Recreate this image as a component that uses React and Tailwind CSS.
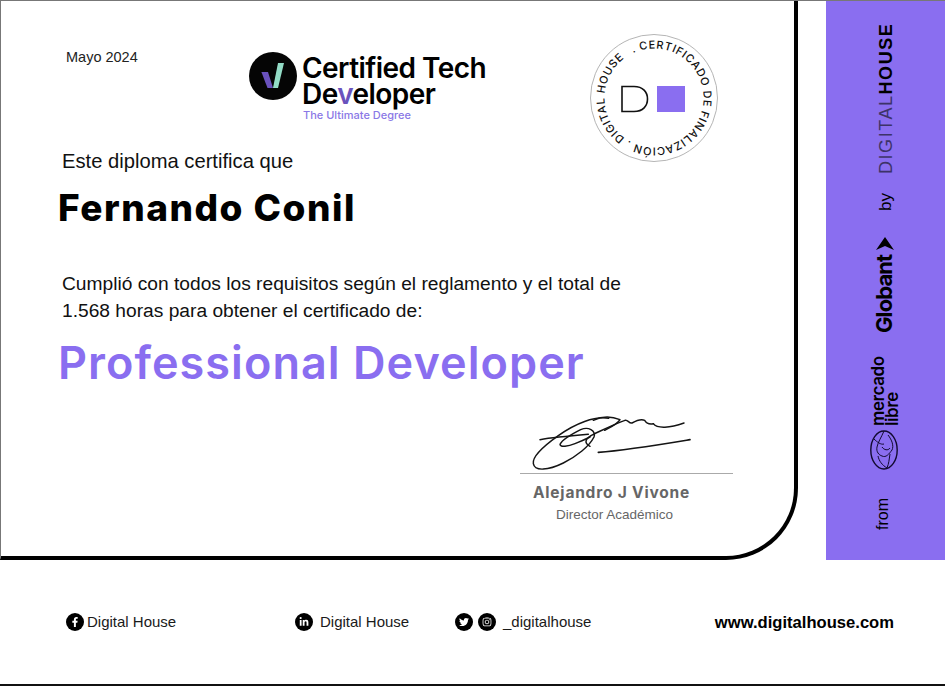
import React from 'react';
import { FaFacebookF, FaLinkedinIn, FaTwitter, FaInstagram } from 'react-icons/fa';

const bodyFont = "font-['Liberation_Sans',sans-serif]";

const CircleIcon = ({ children }) => (
  <span className="w-[18px] h-[18px] rounded-full bg-black text-white flex items-center justify-center text-[10px]">
    {children}
  </span>
);

const Logo = () => (
  <div className="flex items-start">
    <svg width="48" height="48" viewBox="0 0 48 48" className="shrink-0">
      <circle cx="24" cy="24" r="24" fill="#050505" />
      <polygon points="12.4,20 19,20 24,36 18.5,36" fill="#6a52bd" />
      <polygon points="29,11 35,11 29,36 24,36" fill="#93dcc6" />
    </svg>
    <div className="ml-[5px] font-['Inter',sans-serif] text-black">
      <div className="text-[28px] leading-[27px] mt-[3px] font-semibold tracking-[-0.55px] whitespace-nowrap">Certified Tech</div>
      <div className="text-[28px] leading-[25px] font-semibold tracking-[-0.55px]">
        De<span className="text-[#6a52bd]">v</span>eloper
      </div>
      <div className="text-[11px] leading-[12px] mt-[2px] ml-[1px] font-medium text-[#8a78e6] whitespace-nowrap">The Ultimate Degree</div>
    </div>
  </div>
);

const Stamp = () => (
  <svg width="128" height="128" viewBox="0 0 128 128" className="shrink-0">
    <circle cx="64" cy="64" r="63.5" fill="white" stroke="#b5b5b5" strokeWidth="1" />
    <defs>
      <path id="stampCircle" d="M 43.1 19.1 A 49.5 49.5 0 1 1 84.9 108.9 A 49.5 49.5 0 1 1 43.1 19.1" fill="none" />
    </defs>
    <text fontFamily="Inter, sans-serif" fontSize="11" fontWeight="500" fill="#111" textLength="300" lengthAdjust="spacing">
      <textPath href="#stampCircle" textLength="300" lengthAdjust="spacing">. CERTIFICADO DE FINALIZACIÓN . DIGITAL HOUSE</textPath>
    </text>
    <path d="M32 52.5 H44 C53 52.5 57.5 58 57.5 65 C57.5 72 53 77.5 44 77.5 H32 Z" fill="none" stroke="#111" strokeWidth="1.6" />
    <rect x="67" y="52" width="28" height="26" fill="#8a6ef0" />
  </svg>
);

const Signature = () => (
  <svg width="240" height="60" viewBox="0 40 720 180" className="-ml-[10px] block">
    <g fill="none" stroke="#141414" strokeWidth="4.4" strokeLinecap="round" strokeLinejoin="round">
      <path d="M90 120 C125 114 165 110 235 104" />
      <path d="M296 56 C255 48 195 72 145 108 C100 140 66 170 70 192 C74 216 115 212 160 190 C200 170 238 140 252 112 C258 92 235 80 212 90 C188 102 158 118 150 134 C150 144 175 140 195 132 C215 124 232 116 240 112" />
      <path d="M240 140 C220 130 226 116 250 104 C280 90 320 70 345 62 C355 60 356 72 366 70 C380 62 396 58 404 62 C410 72 420 74 430 72" />
      <path d="M250 62 C275 50 300 48 330 60 C322 74 300 84 284 92" />
      <path d="M430 72 C442 88 480 85 522 70" />
      <path d="M265 158 C350 152 450 135 540 120" strokeWidth="5" />
    </g>
  </svg>
);

const MercadoLibreMark = () => (
  <svg width="28" height="40" viewBox="0 0 28 40" className="block">
    <g fill="none" stroke="#120a30" strokeWidth="1">
      <ellipse cx="14" cy="20" rx="13.2" ry="19" strokeWidth="1.4" />
      <path d="M14 1 C11 8 8 12 7 17 C6 22 9 25 12 26 C16 28 19 24 22 20 C24 16 22 10 18 5" />
      <path d="M4 9 C7 12 11 15 14 14 M8 26 C9 31 12 35 17 38 M20 24 C19 30 19 33 17 38 M12 17 C14 20 18 21 20 18" />
    </g>
  </svg>
);

const Sidebar = () => (
  <aside className="w-[119px] h-[559px] ml-[28px] bg-[#8a6ef0] flex flex-col items-center pt-[27px] text-black">
    <div className="[writing-mode:vertical-rl] rotate-180 font-['Liberation_Sans',sans-serif] text-[18px] leading-[18px] tracking-[1.55px] h-[146px] text-right whitespace-nowrap">
      <span className="text-[#3d3368] font-light">DIGITAL</span><span className="font-bold">HOUSE</span>
    </div>
    <div className={`[writing-mode:vertical-rl] rotate-180 mt-[19px] text-[17px] leading-[18px] h-[18px] ${bodyFont}`}>by</div>
    <svg width="18" height="13" viewBox="0 0 18 13" className="mt-[26px] -ml-[2px]">
      <path d="M9 0 L18 13 L9 9 L0 13 Z" fill="#000" />
    </svg>
    <div className="[writing-mode:vertical-rl] rotate-180 mt-[2px] -ml-[2px] font-['Inter',sans-serif] font-bold text-[22px] leading-[21px] tracking-[-0.9px] h-[81px] whitespace-nowrap">Globant</div>
    <div className="[writing-mode:vertical-rl] rotate-180 mt-[23px] -ml-[1px] font-['Inter',sans-serif] font-semibold text-[17px] leading-[13.5px] tracking-[-0.4px] h-[70px] text-left">
      <div>mercado</div>
      <div>libre</div>
    </div>
    <div className="mt-[4px] -ml-[3px]">
      <MercadoLibreMark />
    </div>
    <div className={`[writing-mode:vertical-rl] rotate-180 mt-[28px] -ml-[6px] text-[16px] leading-[18px] ${bodyFont}`}>from</div>
  </aside>
);

const Footer = () => (
  <footer className={`h-[126px] border-b-[2px] border-[#111] flex items-start pt-[53px] text-[#1a1a1a] text-[15px] leading-[18px] ${bodyFont}`}>
    <div className="w-[295px] pl-[66px] flex items-center gap-[3px] shrink-0">
      <CircleIcon><FaFacebookF /></CircleIcon>
      <span>Digital House</span>
    </div>
    <div className="w-[160px] flex items-center gap-[7px] shrink-0">
      <CircleIcon><FaLinkedinIn /></CircleIcon>
      <span>Digital House</span>
    </div>
    <div className="flex items-center gap-[5px] shrink-0">
      <CircleIcon><FaTwitter /></CircleIcon>
      <CircleIcon><FaInstagram /></CircleIcon>
      <span className="ml-[2px]">_digitalhouse</span>
    </div>
    <div className="ml-auto pr-[51px] pt-[1px] font-bold text-[16.6px] text-black">www.digitalhouse.com</div>
  </footer>
);

export default function App() {
  return (
    <div className="w-[945px] h-[686px] bg-white overflow-hidden border-t border-[#777]">
      <div className="flex">
        <main className="w-[798px] h-[559px] border-l border-l-[#777] border-r-4 border-b-4 border-r-black border-b-black rounded-br-[72px] flex flex-col">
          <div className="h-[147px] flex items-start pt-[33px] shrink-0">
            <div className={`w-[248px] pl-[65px] pt-[14px] shrink-0 text-[14.5px] leading-[18px] text-[#222] ${bodyFont}`}>Mayo 2024</div>
            <div className="w-[341px] shrink-0 pt-[18px]"><Logo /></div>
            <Stamp />
          </div>
          <p className={`ml-[61px] text-[20.2px] leading-[26px] text-[#111] ${bodyFont}`}>Este diploma certifica que</p>
          <h1 className="ml-[57px] mt-[12px] font-['Inter',sans-serif] font-extrabold text-[37px] leading-[44px] tracking-[1.5px] text-black">Fernando Conil</h1>
          <p className={`ml-[61px] mt-[40px] text-[19.2px] leading-[27px] text-[#111] ${bodyFont}`}>
            Cumplió con todos los requisitos según el reglamento y el total de<br />
            1.568 horas para obtener el certificado de:
          </p>
          <h2 className="ml-[57px] mt-[13px] font-['Inter',sans-serif] font-semibold text-[45px] leading-[52px] tracking-[1.05px] text-[#8a6ef0]">Professional Developer</h2>
          <div className="ml-[519px] mt-[24px] w-[213px]">
            <Signature />
            <div className="border-t border-[#aaa] text-center pt-[10px] pr-[30px]">
              <div className="font-['Inter',sans-serif] font-bold text-[15.5px] leading-[18px] tracking-[0.8px] text-[#666] whitespace-nowrap">Alejandro J Vivone</div>
              <div className={`mt-[4px] pl-[6px] text-[13.5px] leading-[18px] text-[#666] ${bodyFont}`}>Director Académico</div>
            </div>
          </div>
        </main>
        <Sidebar />
      </div>
      <Footer />
    </div>
  );
}
